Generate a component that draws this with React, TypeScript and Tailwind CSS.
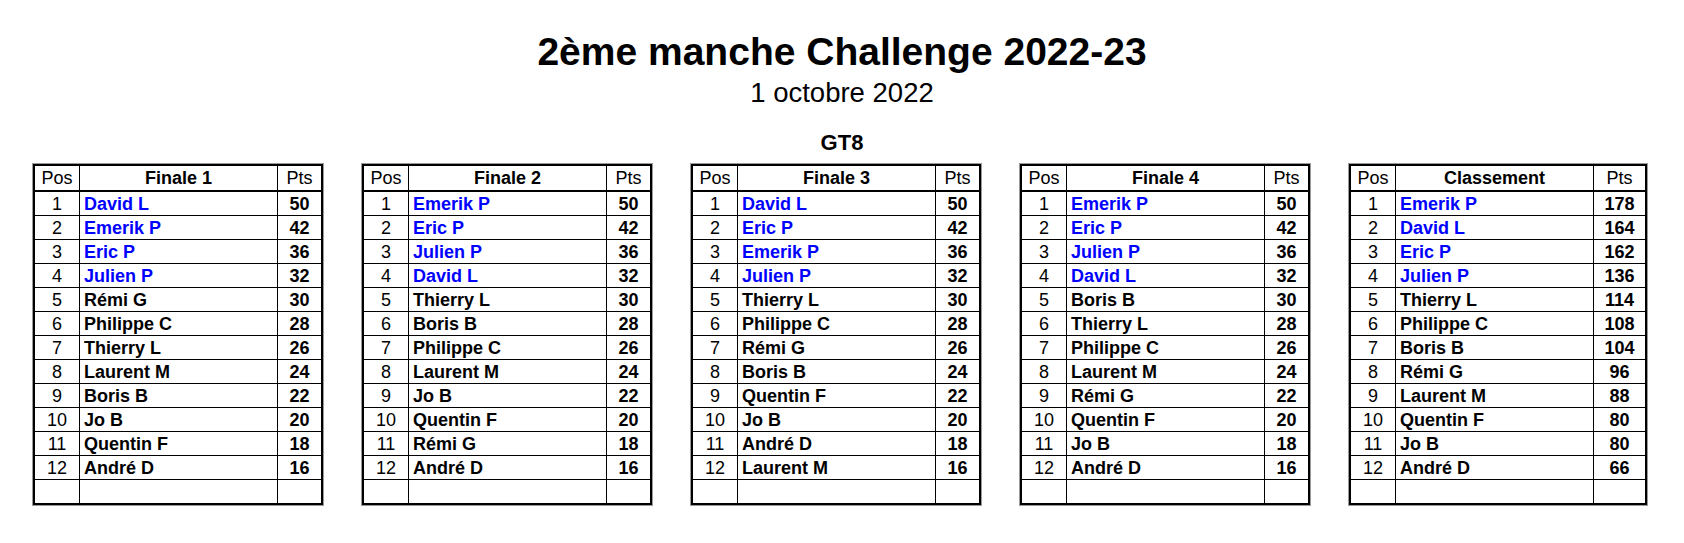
import React from "react";

type Row = [string, number];

interface Standing {
  title: string;
  rows: Row[];
  wide?: boolean;
}

const standings: Standing[] = [
  {
    title: "Finale 1",
    rows: [
      ["David L", 50],
      ["Emerik P", 42],
      ["Eric P", 36],
      ["Julien P", 32],
      ["Rémi G", 30],
      ["Philippe C", 28],
      ["Thierry L", 26],
      ["Laurent M", 24],
      ["Boris B", 22],
      ["Jo B", 20],
      ["Quentin F", 18],
      ["André D", 16],
    ],
  },
  {
    title: "Finale 2",
    rows: [
      ["Emerik P", 50],
      ["Eric P", 42],
      ["Julien P", 36],
      ["David L", 32],
      ["Thierry L", 30],
      ["Boris B", 28],
      ["Philippe C", 26],
      ["Laurent M", 24],
      ["Jo B", 22],
      ["Quentin F", 20],
      ["Rémi G", 18],
      ["André D", 16],
    ],
  },
  {
    title: "Finale 3",
    rows: [
      ["David L", 50],
      ["Eric P", 42],
      ["Emerik P", 36],
      ["Julien P", 32],
      ["Thierry L", 30],
      ["Philippe C", 28],
      ["Rémi G", 26],
      ["Boris B", 24],
      ["Quentin F", 22],
      ["Jo B", 20],
      ["André D", 18],
      ["Laurent M", 16],
    ],
  },
  {
    title: "Finale 4",
    rows: [
      ["Emerik P", 50],
      ["Eric P", 42],
      ["Julien P", 36],
      ["David L", 32],
      ["Boris B", 30],
      ["Thierry L", 28],
      ["Philippe C", 26],
      ["Laurent M", 24],
      ["Rémi G", 22],
      ["Quentin F", 20],
      ["Jo B", 18],
      ["André D", 16],
    ],
  },
  {
    title: "Classement",
    wide: true,
    rows: [
      ["Emerik P", 178],
      ["David L", 164],
      ["Eric P", 162],
      ["Julien P", 136],
      ["Thierry L", 114],
      ["Philippe C", 108],
      ["Boris B", 104],
      ["Rémi G", 96],
      ["Laurent M", 88],
      ["Quentin F", 80],
      ["Jo B", 80],
      ["André D", 66],
    ],
  },
];

function StandingTable({ title, rows, wide }: Standing) {
  const ptsW = wide ? "w-[51px]" : "w-[43px]";

  return (
    <div className="border-2 border-black shadow-[0_0_0_1px_#9a9a9a] text-[18px] leading-none text-black">
      {/* Header */}
      <div className="flex items-stretch h-[26px] border-b-2 border-black">
        <div className="w-[45px] border-r border-black flex items-center justify-center">
          Pos
        </div>
        <div className="w-[198px] border-r border-black flex items-center justify-center font-bold">
          {title}
        </div>
        <div className={`${ptsW} flex items-center justify-center`}>Pts</div>
      </div>

      {rows.map(([name, pts], i) => (
        <div
          key={name + i}
          className="flex items-stretch h-[24px] border-b border-black"
        >
          <div className="w-[45px] border-r border-black flex items-center justify-center">
            {i + 1}
          </div>
          <div
            className={`w-[198px] border-r border-black flex items-center pl-[4px] font-bold ${
              i < 4 ? "text-[#0000ff]" : ""
            }`}
          >
            {name}
          </div>
          <div className={`${ptsW} flex items-center justify-center font-bold`}>
            {pts}
          </div>
        </div>
      ))}

      {/* empty trailing row */}
      <div className="flex items-stretch h-[23px]">
        <div className="w-[45px] border-r border-black" />
        <div className="w-[198px] border-r border-black" />
        <div className={ptsW} />
      </div>
    </div>
  );
}

export default function App() {
  return (
    <div className="min-h-[543px] w-[1684px] bg-white font-['Liberation_Sans',Arial,sans-serif] text-black">
      <div className="flex flex-col items-center pt-[32px]">
        <h1 className="text-[39px] leading-[39px] font-bold">
          2ème manche Challenge 2022-23
        </h1>
        <p className="mt-[8px] text-[27.5px] leading-[27px]">1 octobre 2022</p>
        <h2 className="mt-[26px] text-[22px] leading-[22px] font-bold">GT8</h2>
      </div>

      <div className="flex gap-[39px] pl-[33px] mt-[10px]">
        {standings.map((s) => (
          <StandingTable key={s.title} {...s} />
        ))}
      </div>
    </div>
  );
}
